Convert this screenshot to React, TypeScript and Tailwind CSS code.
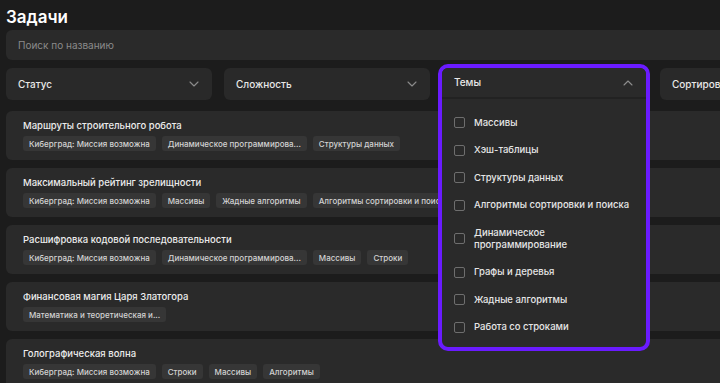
import { ChevronDown, ChevronUp } from "lucide-react";

const tasks = [
  {
    title: "Маршруты строительного робота",
    tags: ["Киберград: Миссия возможна", "Динамическое программирова...", "Структуры данных"],
  },
  {
    title: "Максимальный рейтинг зрелищности",
    tags: ["Киберград: Миссия возможна", "Массивы", "Жадные алгоритмы", "Алгоритмы сортировки и поиска"],
  },
  {
    title: "Расшифровка кодовой последовательности",
    tags: ["Киберград: Миссия возможна", "Динамическое программирова...", "Массивы", "Строки"],
  },
  {
    title: "Финансовая магия Царя Златогора",
    tags: ["Математика и теоретическая и..."],
  },
  {
    title: "Голографическая волна",
    tags: ["Киберград: Миссия возможна", "Строки", "Массивы", "Алгоритмы"],
  },
];

const topics = [
  "Массивы",
  "Хэш-таблицы",
  "Структуры данных",
  "Алгоритмы сортировки и поиска",
  "Динамическое программирование",
  "Графы и деревья",
  "Жадные алгоритмы",
  "Работа со строками",
];

function Filter({ label }: { label: string }) {
  return (
    <div className="h-[32px] rounded-[6px] bg-[#292929] flex items-center justify-between pl-[12px] pr-[10px]">
      <span className="text-[10px] font-medium text-[#e8e8e8]">{label}</span>
      <ChevronDown className="w-[16px] h-[16px] text-[#8c8c8c]" strokeWidth={1.6} />
    </div>
  );
}

export default function App() {
  return (
    <div className="w-[720px] h-[383px] overflow-hidden bg-[#1c1c1c] font-['Inter',sans-serif]">
      <div className="w-[880px] px-[6px]">
        <h1 className="pt-[5px] h-[30px] text-[17px] leading-[24px] font-semibold text-white">Задачи</h1>

        <div className="h-[30px] rounded-[6px] bg-[#2a2a2a] flex items-center px-[12px]">
          <span className="text-[10px] text-[#8a8a8a]">Поиск по названию</span>
        </div>

        <div className="mt-[8px] grid grid-cols-[206px_206px_206px_206px] gap-[12px]">
          <Filter label="Статус" />
          <Filter label="Сложность" />
          <div className="relative z-10 h-[32px]">
            <div className="absolute -left-[4px] -top-[4px] w-[212px] rounded-[10px] border-[4px] border-[#6a1bff] bg-[#2a2a2a] overflow-hidden">
              <div className="h-[31px] flex items-center justify-between pl-[12px] pr-[10px] bg-[#2a2a2a] border-b-[2px] border-[#222222]">
                <span className="text-[10px] font-medium text-[#e8e8e8]">Темы</span>
                <ChevronUp className="w-[16px] h-[16px] text-[#8c8c8c]" strokeWidth={1.6} />
              </div>
              <ul className="pt-[10px] pb-[6px]">
                {topics.map((t) => (
                  <li key={t} className="flex items-center gap-[9px] pl-[12px] pr-[10px] py-[7.75px]">
                    <span className="shrink-0 w-[11px] h-[11px] rounded-[2px] border-[1.5px] border-[#6e6e6e]" />
                    <span className="text-[9.5px] leading-[12px] font-medium text-[#e6e6e6] w-[162px]">{t}</span>
                  </li>
                ))}
              </ul>
            </div>
          </div>
          <Filter label="Сортировка" />
        </div>

        <div className="mt-[11px] flex flex-col gap-[8px]">
          {tasks.map((task) => (
            <div key={task.title} className="h-[49px] rounded-[6px] bg-[#2a2a2a] pt-[8px] px-[17px]">
              <div className="text-[9.5px] leading-[14px] text-[#ececec] font-medium">{task.title}</div>
              <div className="mt-[3px] flex gap-[6px]">
                {task.tags.map((tag) => (
                  <span
                    key={tag}
                    className="h-[15px] rounded-[3px] bg-[#363636] px-[6px] flex items-center text-[8px] font-medium text-[#d2d2d2] whitespace-nowrap"
                  >
                    {tag}
                  </span>
                ))}
              </div>
            </div>
          ))}
        </div>
      </div>
    </div>
  );
}
